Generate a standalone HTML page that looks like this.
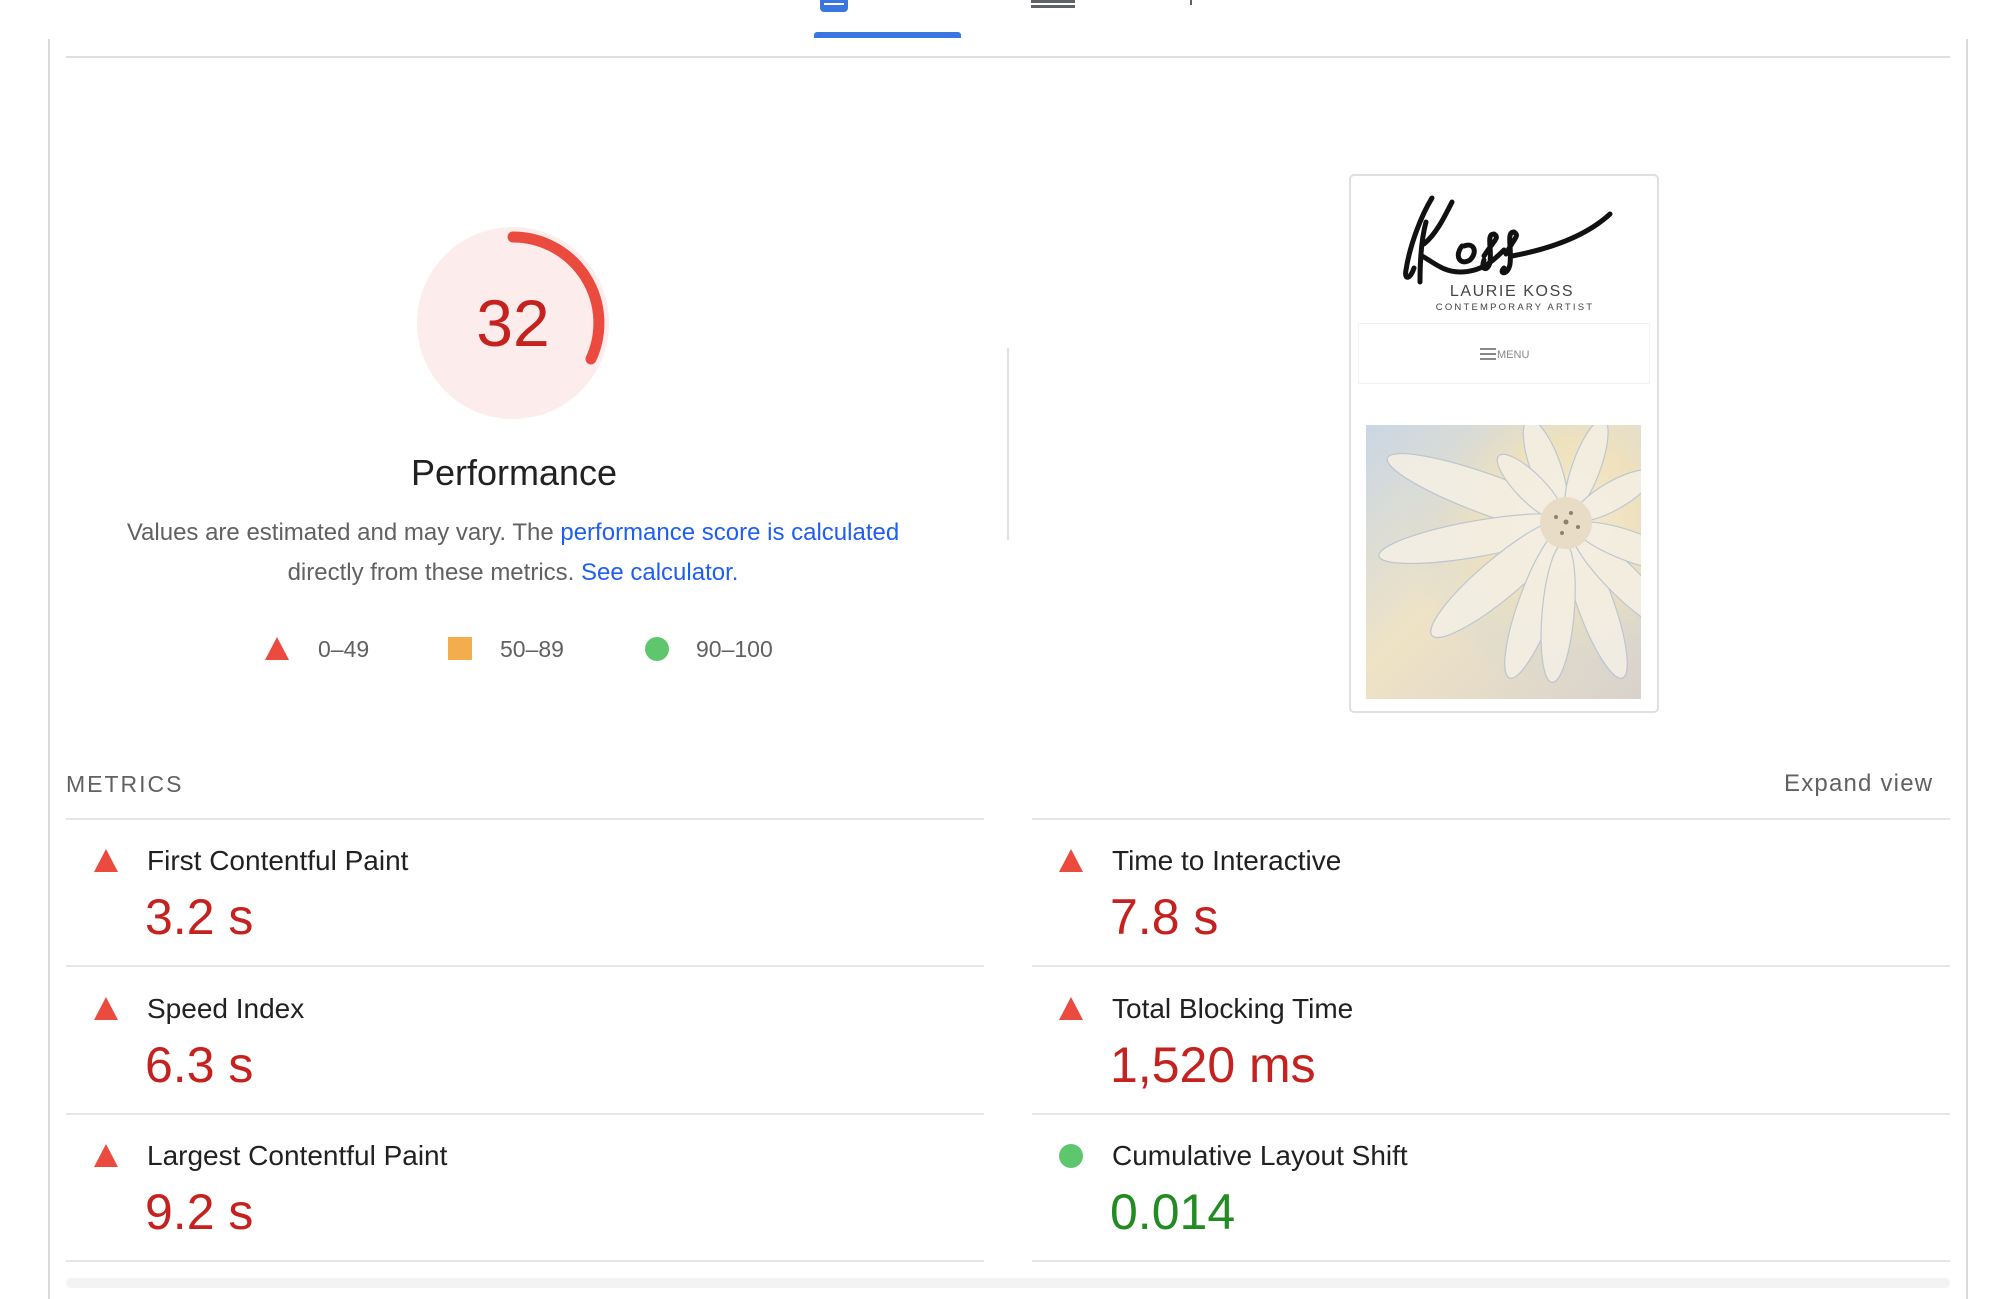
<!DOCTYPE html>
<html><head><meta charset="utf-8"><style>
*{margin:0;padding:0;box-sizing:border-box}
body{width:2016px;height:1282px;background:#fff;position:relative;overflow:hidden;font-family:"Liberation Sans",Arial,sans-serif}
.a{position:absolute;white-space:nowrap}
.ln{position:absolute;height:2px;background:#e6e6e6}
.t{font-size:28px;color:#212121}
.v{font-size:50px;color:#c5221f}
.tri{position:absolute;width:0;height:0;border-left:12px solid transparent;border-right:12px solid transparent;border-bottom:23px solid #eb4a3f}
</style></head><body>
<div class="a" style="left:820px;top:-4px;width:28px;height:16px;border-radius:4px;background:#3a76e1"></div>
<div class="a" style="left:824px;top:3px;width:20px;height:2px;background:#fff"></div>
<div class="a" style="left:814px;top:32px;width:147px;height:6px;border-radius:3px 3px 0 0;background:#3a76e1"></div>
<div class="a" style="left:1031px;top:0;width:44px;height:8px;border-top:3px solid #5f6368;border-bottom:3px solid #5f6368"></div>
<div class="a" style="left:1034px;top:0;width:38px;height:2px;background:#5f6368"></div>
<div class="a" style="left:1190px;top:0;width:2px;height:5px;background:#5f6368"></div>
<div class="a" style="left:48px;top:39px;width:2px;height:1260px;background:#dadada"></div>
<div class="a" style="left:1966px;top:39px;width:2px;height:1260px;background:#dadada"></div>
<div class="ln" style="left:66px;top:56px;width:1884px;height:2px;background:#e0e0e0"></div>
<svg class="a" style="left:413px;top:222px" width="200" height="202" viewBox="0 0 200 202">
<circle cx="100" cy="101" r="96" fill="#fdecec"/>
<path d="M100 15 A86 86 0 0 1 178 137" fill="none" stroke="#eb4a3f" stroke-width="11" stroke-linecap="round"/>
</svg>
<div class="a" style="left:413px;top:285px;width:200px;text-align:center;font-size:66px;color:#c5221f">32</div>
<div class="a" style="left:314px;top:452px;width:400px;text-align:center;font-size:36px;color:#212121">Performance</div>
<div class="a" style="left:68px;top:513px;width:890px;text-align:center;font-size:24px;line-height:40px;color:#616161">Values are estimated and may vary. The <span style="color:#1e5ef5">performance score is calculated</span><br>directly from these metrics. <span style="color:#1e5ef5">See calculator.</span></div>
<div class="tri" style="left:265px;top:637px"></div>
<div class="a" style="left:318px;top:636px;font-size:23px;color:#616161">0–49</div>
<div class="a" style="left:448px;top:637px;width:24px;height:23px;background:#f4ad4c"></div>
<div class="a" style="left:500px;top:636px;font-size:23px;color:#616161">50–89</div>
<div class="a" style="left:645px;top:637px;width:24px;height:24px;border-radius:50%;background:#5ec76e"></div>
<div class="a" style="left:696px;top:636px;font-size:23px;color:#616161">90–100</div>
<div class="a" style="left:1007px;top:348px;width:2px;height:192px;background:#e0e0e0"></div>
<div class="a" style="left:1349px;top:174px;width:310px;height:539px;border:2px solid #e0e0e0;border-radius:5px;background:#fff"></div>
<svg class="a" style="left:1350px;top:174px" width="310" height="160" viewBox="0 0 310 160">
<g fill="none" stroke="#111" stroke-width="5" stroke-linecap="round" stroke-linejoin="round" transform="translate(-6 -10)">
<path d="M88 34 C78 50 66 80 62 106 C60 116 66 116 70 104"/>
<path d="M80 80 C92 70 100 54 108 38"/>
<path d="M78 92 C92 100 100 108 116 108 C138 108 150 96 160 86"/>
<path d="M82 58 C76 80 76 110 76 118"/>
<path d="M118 82 C110 92 116 102 126 96 C134 88 130 78 120 82"/>
<path d="M140 92 C150 76 156 74 150 70 C142 70 148 84 146 98 C144 108 136 106 140 96"/>
<path d="M162 90 C170 74 176 72 170 68 C162 68 168 84 166 100 C164 112 154 110 160 104"/>
<path d="M168 92 C200 86 240 74 266 50"/>
</g>
<text x="162" y="122" text-anchor="middle" font-size="16" letter-spacing="1.6" fill="#444" font-family="Liberation Sans, sans-serif">LAURIE KOSS</text>
<text x="165" y="136" text-anchor="middle" font-size="9.5" letter-spacing="2.2" fill="#444" font-family="Liberation Sans, sans-serif">CONTEMPORARY ARTIST</text>
</svg>
<div class="a" style="left:1358px;top:323px;width:292px;height:61px;border:1px solid #f2f2f2"></div>
<div class="a" style="left:1480px;top:348px;width:16px;height:12px;border-top:2px solid #888;border-bottom:2px solid #888"></div>
<div class="a" style="left:1480px;top:353px;width:16px;height:2px;background:#888"></div>
<div class="a" style="left:1497px;top:349px;font-size:11px;color:#888">MENU</div>
<svg class="a" style="left:1366px;top:425px" width="275" height="274" viewBox="0 0 275 274">
<defs>
<linearGradient id="bg" x1="0" y1="0" x2="1" y2="1"><stop offset="0" stop-color="#c9d6e4"/><stop offset=".45" stop-color="#efe3c6"/><stop offset="1" stop-color="#d8d2cc"/></linearGradient>
<radialGradient id="c" cx=".73" cy=".36" r=".6"><stop offset="0" stop-color="#f6ecd2"/><stop offset=".5" stop-color="#f0e1b8" stop-opacity=".7"/><stop offset="1" stop-color="#c5d3e2" stop-opacity="0"/></radialGradient>
</defs>
<rect width="275" height="274" fill="url(#bg)"/>
<rect width="275" height="274" fill="url(#c)"/>
<g fill="#f4efe4" stroke="#b8c4d2" stroke-width="1.2" opacity=".9">
<g transform="translate(200 98)">
<ellipse rx="20" ry="110" transform="rotate(-70) translate(0 -80)"/>
<ellipse rx="18" ry="100" transform="rotate(-100) translate(0 -90)"/>
<ellipse rx="20" ry="90" transform="rotate(-130) translate(0 -85)"/>
<ellipse rx="18" ry="80" transform="rotate(-160) translate(0 -85)"/>
<ellipse rx="18" ry="80" transform="rotate(160) translate(0 -85)"/>
<ellipse rx="16" ry="70" transform="rotate(185) translate(0 -90)"/>
<ellipse rx="16" ry="70" transform="rotate(135) translate(0 -80)"/>
<ellipse rx="15" ry="60" transform="rotate(110) translate(0 -70)"/>
<ellipse rx="15" ry="50" transform="rotate(-20) translate(0 -60)"/>
<ellipse rx="14" ry="50" transform="rotate(20) translate(0 -60)"/>
<ellipse rx="14" ry="45" transform="rotate(60) translate(0 -55)"/>
<ellipse rx="14" ry="45" transform="rotate(-45) translate(0 -50)"/>
</g>
</g>
<circle cx="200" cy="98" r="26" fill="#e8dcc6"/>
<g fill="#6b5848" opacity=".7"><circle cx="190" cy="92" r="2"/><circle cx="205" cy="88" r="2"/><circle cx="212" cy="102" r="2"/><circle cx="196" cy="108" r="2"/><circle cx="200" cy="97" r="2.5"/></g>
</svg>
<div class="a" style="left:66px;top:771px;font-size:23px;letter-spacing:2px;color:#616161">METRICS</div>
<div class="a" style="left:1784px;top:770px;font-size:24px;letter-spacing:1.2px;color:#616161">Expand view</div>
<div class="ln" style="left:66px;top:818px;width:918px"></div>
<div class="ln" style="left:1032px;top:818px;width:918px"></div>
<div class="ln" style="left:66px;top:965px;width:918px"></div>
<div class="ln" style="left:1032px;top:965px;width:918px"></div>
<div class="ln" style="left:66px;top:1113px;width:918px"></div>
<div class="ln" style="left:1032px;top:1113px;width:918px"></div>
<div class="ln" style="left:66px;top:1260px;width:918px"></div>
<div class="ln" style="left:1032px;top:1260px;width:918px"></div>
<div class="a" style="left:66px;top:1278px;width:1884px;height:10px;border-radius:6px;background:#f3f3f3"></div>
<div class="tri" style="left:94px;top:849px"></div>
<div class="a t" style="left:147px;top:845px">First Contentful Paint</div>
<div class="a v" style="left:145px;top:888px">3.2 s</div>
<div class="tri" style="left:1059px;top:849px"></div>
<div class="a t" style="left:1112px;top:845px">Time to Interactive</div>
<div class="a v" style="left:1110px;top:888px">7.8 s</div>
<div class="tri" style="left:94px;top:997px"></div>
<div class="a t" style="left:147px;top:993px">Speed Index</div>
<div class="a v" style="left:145px;top:1036px">6.3 s</div>
<div class="tri" style="left:1059px;top:997px"></div>
<div class="a t" style="left:1112px;top:993px">Total Blocking Time</div>
<div class="a v" style="left:1110px;top:1036px">1,520 ms</div>
<div class="tri" style="left:94px;top:1144px"></div>
<div class="a t" style="left:147px;top:1140px">Largest Contentful Paint</div>
<div class="a v" style="left:145px;top:1183px">9.2 s</div>
<div class="a" style="left:1059px;top:1144px;width:24px;height:24px;border-radius:50%;background:#5ec76e"></div>
<div class="a t" style="left:1112px;top:1140px">Cumulative Layout Shift</div>
<div class="a v" style="left:1110px;top:1183px;color:#228b22">0.014</div>
</body></html>
